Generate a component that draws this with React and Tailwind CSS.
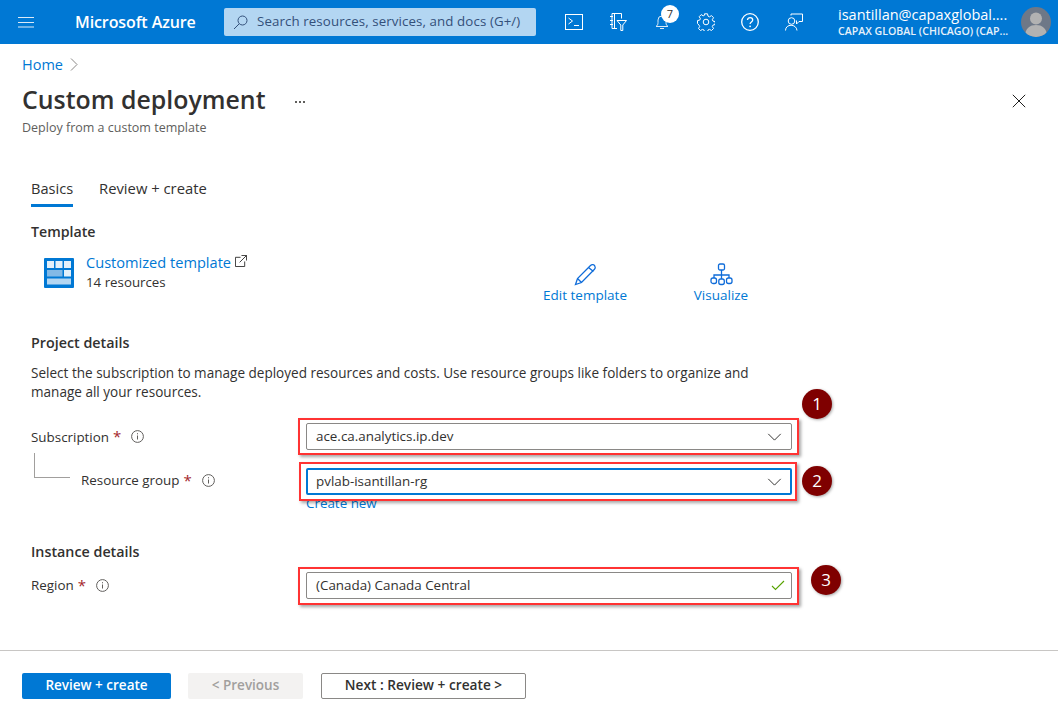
const F = { fontFamily: '"Open Sans", "Noto Sans", sans-serif' };

function Info() {
  return (
    <svg width="13" height="13" viewBox="0 0 13 13" fill="none" stroke="#605e5c" strokeWidth="1">
      <circle cx="6.5" cy="6.5" r="5.9" />
      <path d="M6.5 5.5v4M6.5 3.2v1.1" />
    </svg>
  );
}

function Chevron() {
  return (
    <svg width="15" height="8" viewBox="0 0 16 9" fill="none" stroke="#323130" strokeWidth="1.1">
      <path d="M1 1l7 7 7-7" />
    </svg>
  );
}

function Badge({ n, className }) {
  return (
    <div className={`absolute w-[30px] h-[30px] rounded-full bg-[#7f0000] text-white text-[17px] flex items-center justify-center shadow-[1px_1px_3px_rgba(0,0,0,0.35)] ${className}`}>
      {n}
    </div>
  );
}

function Field({ value, focus, right, box, children }) {
  return (
    <div className="relative w-[486px]">
      <div className={`absolute border-[2px] border-[#ff3333] shadow-[2px_2px_3px_rgba(0,0,0,0.35)] ${box}`} />
      <div className={`relative h-[27px] flex items-center justify-between rounded-[2px] bg-white text-[13.4px] text-[#323130] ${focus ? 'border-2 border-[#0078d4] pl-[8px] pr-[8px]' : 'border border-[#8a8886] pl-[9px] pr-[9px]'}`}>
        <span>{value}</span>
        {right}
      </div>
      {children}
    </div>
  );
}

function Label({ text, indent, gap }) {
  return (
    <div className={`flex items-center text-[13.4px] text-[#323130] ${indent}`}>
      <span>{text}</span>
      <span className="text-[#a4262c] ml-[4px] text-[15px] leading-none">*</span>
      <span className={`flex ${gap}`}><Info /></span>
    </div>
  );
}

function TopIcon({ children, badge }) {
  return (
    <div className="relative w-[44px] h-[44px] flex items-center justify-center">
      {children}
      {badge && (
        <div className="absolute left-[21px] top-[5px] w-[18px] h-[18px] rounded-full bg-white text-[#323130] text-[11px] flex items-center justify-center">
          {badge}
        </div>
      )}
    </div>
  );
}

export default function App() {
  return (
    <div style={F} className="w-[1058px] h-[713px] flex flex-col bg-white overflow-hidden text-[#323130]">
      <header className="h-[44px] shrink-0 bg-[#0078d4] flex items-center text-white">
        <svg className="ml-[18px]" width="16" height="12" viewBox="0 0 16 12" stroke="#dbeaf7" strokeWidth="1">
          <path d="M0 1.5h16M0 6.5h16M0 11h16" />
        </svg>
        <div className="ml-[41px] w-[149px] text-[16px] font-semibold tracking-[-0.1px] whitespace-nowrap">Microsoft Azure</div>
        <div className="w-[312px] h-[28px] rounded-[2px] bg-[#b3d6f2] flex items-center text-[#33507a] text-[13.3px]">
          <svg className="ml-[9px]" width="15" height="15" viewBox="0 0 15 15" fill="none" stroke="#33507a" strokeWidth="1">
            <circle cx="9.5" cy="5.5" r="4.5" />
            <path d="M6.2 8.8L1 14" />
          </svg>
          <span className="ml-[9px] tracking-[0.1px] whitespace-nowrap">Search resources, services, and docs (G+/)</span>
        </div>
        <div className="ml-[16px] flex">
          <TopIcon>
            <svg width="18" height="16" viewBox="0 0 18 16" fill="none" stroke="white" strokeWidth="1">
              <rect x="0.5" y="0.5" width="17" height="15" />
              <path d="M3.5 4l4 3-4 3M9 11.5h5" />
            </svg>
          </TopIcon>
          <TopIcon>
            <svg width="18" height="18" viewBox="0 0 18 18" fill="none" stroke="white" strokeWidth="1">
              <path d="M3 .5h9.500v5M3 .5v15h5" />
              <path d="M5.500 .5v15M1 3.500h3M1 7.500h3M1 11.500h3" />
              <path d="M8 7.500h9.500l-3.700 4.500v5.500h-2v-5.500z" />
            </svg>
          </TopIcon>
          <TopIcon badge="7">
            <svg width="16" height="16" viewBox="0 0 16 16" fill="none" stroke="#dbeaf7" strokeWidth="1">
              <path d="M2 12.500h12c-1.500-1-2-2-2-4V6a4 4 0 0 0-8 0v2.500c0 2-.5 3-2 4zM6 14.500h4" />
            </svg>
          </TopIcon>
          <TopIcon>
            <svg width="18" height="18" viewBox="0 0 18 18" fill="none" stroke="white" strokeWidth="1">
              <circle cx="9" cy="9" r="2.800" />
              <path d="M7.500 .8h3l.5 2.300 1.500.7 2-1.200 2 2.100-1.200 2 .7 1.400 2.200.5v2.900l-2.200.6-.7 1.400 1.200 2-2 2-2-1.100-1.500.6-.5 2.300h-3l-.5-2.300-1.500-.6-2 1.100-2-2 1.200-2-.7-1.400L.5 10.500V7.600l2.200-.5.7-1.400-1.200-2 2-2.100 2 1.200 1.500-.7z" />
            </svg>
          </TopIcon>
          <TopIcon>
            <svg width="18" height="18" viewBox="0 0 18 18" fill="none" stroke="white">
              <circle cx="9" cy="9" r="8.300" strokeWidth="1.300" />
              <path d="M6.500 7c0-3.300 5.200-3.300 5.200 0 0 2-2.600 2-2.600 4" strokeWidth="1.300" />
              <circle cx="9.100" cy="13.300" r=".9" fill="white" stroke="none" />
            </svg>
          </TopIcon>
          <TopIcon>
            <svg width="18" height="18" viewBox="0 0 18 18" fill="none" stroke="white" strokeWidth="1">
              <path d="M6 2V.5h11.500v7.500h-3.500l-2.500 2.500V7" transform="translate(0 .5)" />
              <circle cx="6.500" cy="8" r="3.300" />
              <path d="M.5 17.500c0-7 11-7 11.500 0" />
            </svg>
          </TopIcon>
        </div>
        <div className="ml-[22px] w-[174px] flex flex-col">
          <div className="text-[14.5px] leading-[18px] whitespace-nowrap">isantillan@capaxglobal....</div>
          <div className="text-[10.6px] leading-[14px] font-semibold whitespace-nowrap text-[#e6f1fa]">CAPAX GLOBAL (CHICAGO) (CAP...</div>
        </div>
        <div className="ml-[9px] w-[30px] h-[30px] rounded-full bg-[#6e7887] overflow-hidden">
          <svg width="30" height="30" viewBox="0 0 30 30" fill="#b2b2b2">
            <circle cx="15" cy="11.500" r="6" />
            <path d="M4 30c0-9 5-12 11-12s11 3 11 12z" />
          </svg>
        </div>
      </header>

      <main className="flex-1 relative">
        <div className="pl-[22px] pt-[11px] flex items-center h-[30px] text-[14.5px] text-[#0078d4]">
          <span>Home</span>
          <svg className="ml-[7px]" width="8" height="13" viewBox="0 0 8 13" fill="none" stroke="#8a8886" strokeWidth="1">
            <path d="M1 .5l6 6-6 6" />
          </svg>
        </div>
        <div className="pl-[22px] pr-[32px] mt-[9px] flex items-center h-[34px]">
          <h1 className="text-[24.9px] font-semibold text-[#323130] whitespace-nowrap">Custom deployment</h1>
          <div className="ml-[29px] mt-[4px] flex gap-[2px]">
            <span className="w-[2px] h-[1.5px] bg-[#605e5c]" />
            <span className="w-[2px] h-[1.5px] bg-[#605e5c]" />
            <span className="w-[2px] h-[1.5px] bg-[#605e5c]" />
          </div>
          <svg className="ml-auto mt-[2px]" width="14" height="14" viewBox="0 0 14 14" stroke="#201f1e" strokeWidth="1">
            <path d="M.8 .8l12.400 12.400M13.200 .8L.8 13.200" />
          </svg>
        </div>
        <div className="pl-[22px] text-[12.5px] leading-[16px] mt-[3px] text-[#605e5c]">Deploy from a custom template</div>

        <div className="pl-[31px]">
          <div className="mt-[42px] flex text-[14.8px] leading-[20px]">
            <div className="w-[42px] pb-[6px] border-b-[3px] border-[#0078d4] text-[#323130] whitespace-nowrap text-[14.6px]">Basics</div>
            <div className="ml-[26px] whitespace-nowrap">Review + create</div>
          </div>
          <h2 className="mt-[15px] text-[14.2px] leading-[20px] font-semibold">Template</h2>
          <div className="mt-[11px] flex h-[58px]">
            <svg className="ml-[13px] mt-[5px] shrink-0" width="30" height="30" viewBox="0 0 30 30">
              <rect width="30" height="30" rx="1" fill="#0078d4" />
              <rect x="3" y="3" width="7" height="7" fill="#e3f0fa" />
              <rect x="11.500" y="3" width="7" height="7" fill="#e3f0fa" />
              <rect x="20" y="3" width="7" height="7" fill="#e3f0fa" />
              <rect x="3" y="12" width="15.500" height="6.500" fill="#83b9e6" />
              <rect x="20" y="12" width="7" height="6.500" fill="#e3f0fa" />
              <rect x="3" y="20.500" width="24" height="6" fill="#b3d6f2" />
            </svg>
            <div className="ml-[12px] w-[457px]">
              <div className="flex items-center text-[14.6px] leading-[20px] mt-[-1px] text-[#0078d4]">
                <span>Customized template</span>
                <svg className="ml-[4px] mb-[3px]" width="12" height="12" viewBox="0 0 13 13" fill="none" stroke="#323130" strokeWidth="1">
                  <path d="M6 2.500H.5v10h10V7M7 .5h5.500V6M12.500 .5L5 8" />
                </svg>
              </div>
              <div className="text-[13.3px] leading-[21px] text-[#323130]">14 resources</div>
            </div>
            <div className="w-[84px] flex flex-col items-center text-[13.5px] text-[#0078d4] shrink-0">
              <svg className="mt-[10px]" width="23" height="23" viewBox="0 0 23 23" fill="none" stroke="#0f6cd9" strokeWidth="1.300">
                <path d="M1.500 21.500l2-6L16.500 2.500c1.500-1.500 4-1 4.500 1 .5 1 .2 2-.5 2.700L7.500 19.500zM14.500 4.500l5 4M3.500 15.500l4 4" />
              </svg>
              <span className="leading-[18px] whitespace-nowrap">Edit template</span>
            </div>
            <div className="ml-[67px] w-[54px] flex flex-col items-center text-[13.5px] text-[#0078d4] shrink-0">
              <svg className="mt-[10px]" width="23" height="23" viewBox="0 0 23 23" fill="none" stroke="#0f6cd9" strokeWidth="1.300">
                <rect x="8.500" y="1" width="6" height="6" rx="1.500" />
                <rect x="1" y="15" width="5.500" height="5.500" rx="2" />
                <rect x="8.800" y="16" width="5.500" height="5.500" rx="2" />
                <rect x="16.500" y="15" width="5.500" height="5.500" rx="2" />
                <path d="M11.500 7v9M4 15v-3h15v3" />
              </svg>
              <span className="leading-[18px]">Visualize</span>
            </div>
          </div>

          <h2 className="mt-[22px] text-[14.3px] leading-[20px] font-semibold">Project details</h2>
          <p className="mt-[11px] w-[730px] text-[13.55px] leading-[19px] text-[#323130]">
            Select the subscription to manage deployed resources and costs. Use resource groups like folders to organize and manage all your resources.
          </p>

          <div className="mt-[21px] flex items-center">
            <div className="w-[275px] pt-[1px]"><Label text="Subscription" gap="ml-[10px]" /></div>
            <Field value="ace.ca.analytics.ip.dev" right={<Chevron />} box="-left-[8px] -right-[7px] -top-[5px] -bottom-[5px]" />
          </div>

          <div className="relative mt-[18px] flex items-center">
            <div className="absolute left-[3px] top-[-15px] w-[36px] h-[25px] border-l border-b border-[#a19f9d]" />
            <div className="w-[275px] pb-[2px]"><Label text="Resource group" indent="pl-[50px]" gap="ml-[10px]" /></div>
            <Field value="pvlab-isantillan-rg" focus right={<Chevron />} box="-left-[7px] -right-[5px] -top-[6px] -bottom-[6px]" />
          </div>
          <div className="ml-[275px] text-[13.4px] leading-[18px] mt-[-1px] text-[#0078d4]">Create new</div>

          <h2 className="mt-[30px] text-[14.3px] leading-[20px] font-semibold">Instance details</h2>
          <div className="mt-[10px] flex items-center">
            <div className="w-[275px]"><Label text="Region" gap="ml-[10px]" /></div>
            <Field
              value="(Canada) Canada Central"
              right={
                <svg className="mr-[-3px]" width="14" height="11" viewBox="0 0 14 11" fill="none" stroke="#57a300" strokeWidth="1.100">
                  <path d="M1 6l3.500 3.500L13 1" />
                </svg>
              }
              box="-left-[8px] -right-[7px] -top-[5px] -bottom-[6px]"
            />
          </div>
        </div>

        <Badge n="1" className="left-[802px] top-[345px]" />
        <Badge n="2" className="left-[802px] top-[422px]" />
        <Badge n="3" className="left-[811px] top-[521px]" />
      </main>

      <footer className="h-[63px] shrink-0 border-t border-[#c8c6c4] pt-[22px] pl-[22px] flex items-start text-[13.5px] font-semibold">
        <div className="w-[149px] h-[26px] pb-[1px] rounded-[2px] bg-[#0078d4] text-white flex items-center justify-center">Review + create</div>
        <div className="ml-[17px] w-[115px] h-[26px] pb-[1px] rounded-[2px] bg-[#f3f2f1] text-[#a19f9d] flex items-center justify-center">&lt; Previous</div>
        <div className="ml-[18px] w-[205px] h-[26px] pb-[1px] rounded-[2px] border border-[#8a8886] text-[#323130] text-[13.7px] flex items-center justify-center">Next : Review + create &gt;</div>
      </footer>
    </div>
  );
}
